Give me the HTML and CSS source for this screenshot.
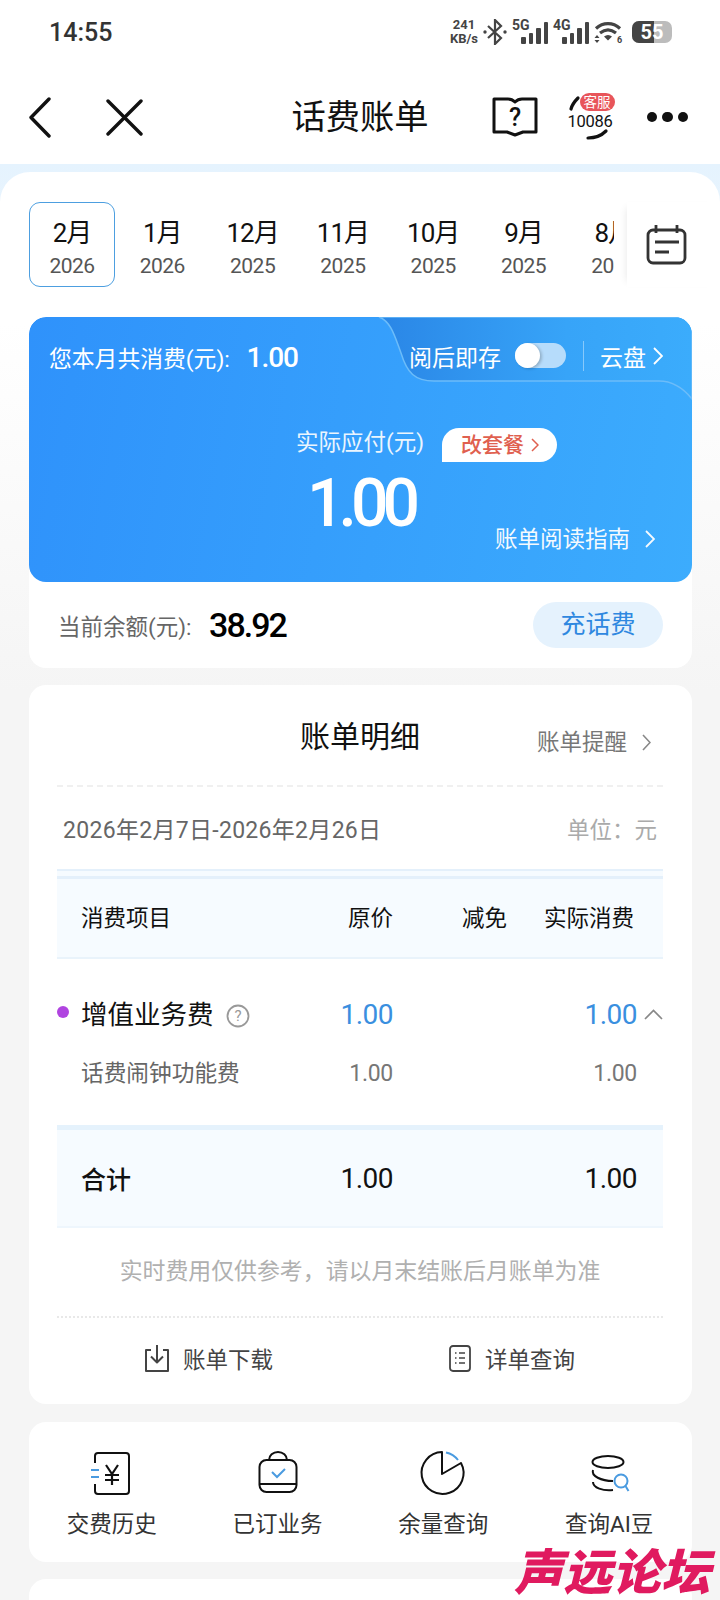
FILE: index.html
```html
<!DOCTYPE html>
<html lang="zh-CN">
<head>
  <meta charset="UTF-8">
  <meta name="viewport" content="width=device-width, initial-scale=1.0">
  <title>话费账单</title>
  <link rel="stylesheet" href="styles.css">
</head>
<body>
  <div class="status-bar">
    <div class="time">14:55</div>
    <div class="status-icons">
      <div class="speed"><span>241</span><span>KB/s</span></div>
      <svg class="ic-bt" width="24" height="26" viewBox="0 0 24 26"><path d="M5 7l13 12-6 6V1l6 6L5 19" fill="none" stroke="#444" stroke-width="2.2"/><circle cx="2" cy="13" r="1.7" fill="#444"/><circle cx="22" cy="13" r="1.7" fill="#444"/></svg>
      <div class="signal"><span class="net">5G</span><i class="b1"></i><i class="b2"></i><i class="b3"></i><i class="b4"></i></div>
      <div class="signal"><span class="net">4G</span><i class="b1"></i><i class="b2"></i><i class="b3"></i><i class="b4"></i></div>
      <svg class="ic-wifi" width="29" height="24" viewBox="0 0 29 24"><path d="M2 8.500C9 2 19 2 26 8.500M6 13c5-4 11-4 16 0" fill="none" stroke="#444" stroke-width="3.200"/><path d="M10 16.500c2.500-2 5.500-2 8 0l-4 4z" fill="#444"/><path d="M3 15l-2.500 3h5zM3 23l-2.500-3h5z" fill="#444"/><text x="23" y="23" class="wifi-num">6</text></svg>
      <div class="battery"><div class="battery-fill"></div><span>55</span></div>
    </div>
  </div>

  <div class="nav">
    <div class="nav-left">
      <svg width="24" height="41" viewBox="0 0 24 41"><path d="M21 2L3 20.500 21 39" fill="none" stroke="#111" stroke-width="3.400" stroke-linecap="round" stroke-linejoin="round"/></svg>
      <svg width="37" height="37" viewBox="0 0 37 37"><path d="M2 2l33 33M35 2L2 35" fill="none" stroke="#111" stroke-width="3.400" stroke-linecap="round"/></svg>
    </div>
    <div class="nav-title">话费账单</div>
    <div class="nav-right">
      <svg class="ic-book" width="46" height="40" viewBox="0 0 46 40"><path d="M2 2h14c3 0 5 1 7 3 2-2 4-3 7-3h14v33H31l-8 3-8-3H2z" fill="none" stroke="#111" stroke-width="3" stroke-linejoin="round"/><text x="23" y="29" class="book-q">?</text></svg>
      <div class="service">
        <svg class="service-arcs" width="46" height="46" viewBox="0 0 46 46"><path d="M3 15c1-4 3-7 7-11M20 44c7 0 13-2 18-7" fill="none" stroke="#111" stroke-width="3.200" stroke-linecap="round"/></svg>
        <span class="service-num">10086</span>
        <span class="service-tag">客服</span>
      </div>
      <div class="dots"><i></i><i></i><i></i></div>
    </div>
  </div>

  <div class="band">
    <div class="sheet">
      <div class="months">
        <div class="month-list">
          <div class="month active"><b>2月</b><span>2026</span></div>
          <div class="month"><b>1月</b><span>2026</span></div>
          <div class="month"><b>12月</b><span>2025</span></div>
          <div class="month"><b>11月</b><span>2025</span></div>
          <div class="month"><b>10月</b><span>2025</span></div>
          <div class="month"><b>9月</b><span>2025</span></div>
          <div class="month"><b>8月</b><span>2025</span></div>
        </div>
        <div class="month-cal">
          <svg width="41" height="41" viewBox="0 0 41 41"><rect x="2" y="6" width="37" height="33" rx="5" fill="none" stroke="#333" stroke-width="2.800"/><path d="M10 1v8M31 1v8M9 18h24M9 28h14" fill="none" stroke="#333" stroke-width="2.800"/></svg>
        </div>
      </div>

      <div class="card summary">
        <div class="hero">
          <svg class="hero-bg" width="663" height="100" viewBox="0 0 663 100"><defs><linearGradient id="heroShade" x1="0" y1="0" x2="1" y2="0"><stop offset="0" stop-color="#2a86e6"/><stop offset="0.6" stop-color="#37a4f8"/><stop offset="1" stop-color="#3bacfc"/></linearGradient></defs><path d="M350 0c12 4 16 20 22 36 6 20 14 28 33 28h225c15 0 25 8 33 18V0z" fill="url(#heroShade)" stroke="#6cbcf9" stroke-width="1.500"/></svg>
          <div class="hero-top">
            <div class="hero-total">您本月共消费(元): <span class="num">1.00</span></div>
            <div class="hero-tools">
              <span>阅后即存</span>
              <div class="toggle"><div class="knob"></div></div>
              <div class="sep"></div>
              <span>云盘</span>
              <svg class="chev" width="10" height="18" viewBox="0 0 10 18"><path d="M1 1l8 8-8 8" fill="none" stroke="#fff" stroke-width="1.800"/></svg>
            </div>
          </div>
          <div class="hero-pay">
            <div class="pay-label">实际应付(元)</div>
            <div class="pay-tag">改套餐 <svg width="8" height="14" viewBox="0 0 8 14"><path d="M1 1l6 6-6 6" fill="none" stroke="#e0604f" stroke-width="1.500"/></svg></div>
          </div>
          <div class="pay-amount">1.00</div>
          <div class="hero-guide">账单阅读指南 <svg width="10" height="18" viewBox="0 0 10 18"><path d="M1 1l8 8-8 8" fill="none" stroke="#fff" stroke-width="1.800"/></svg></div>
        </div>
        <div class="balance">
          <div class="balance-text">当前余额(元): <span class="balance-num">38.92</span></div>
          <div class="recharge">充话费</div>
        </div>
      </div>

      <div class="card detail">
        <div class="detail-head">
          <div class="detail-title">账单明细</div>
          <div class="detail-remind">账单提醒 <svg width="9" height="17" viewBox="0 0 9 17"><path d="M1 1l7 7.500-7 7.500" fill="none" stroke="#888" stroke-width="1.600"/></svg></div>
        </div>
        <div class="period">
          <span>2026年2月7日-2026年2月26日</span>
          <span class="unit">单位：元</span>
        </div>
        <div class="row row-head">
          <div>消费项目</div>
          <div class="r">原价</div>
          <div class="r">减免</div>
          <div class="r nudge">实际消费</div>
        </div>
        <div class="row row-item">
          <div class="item-name"><i class="dot"></i>增值业务费
            <svg width="24" height="24" viewBox="0 0 24 24"><circle cx="12" cy="12" r="10.500" fill="none" stroke="#999" stroke-width="1.800"/><text x="12" y="17" class="q-mark">?</text></svg>
          </div>
          <div class="r num">1.00</div>
          <div></div>
          <div class="r num">1.00</div>
          <svg class="row-chev" width="19" height="11" viewBox="0 0 19 11"><path d="M1 10l8.500-8.500L18 10" fill="none" stroke="#888" stroke-width="1.700"/></svg>
        </div>
        <div class="row row-sub">
          <div>话费闹钟功能费</div>
          <div class="r sub-num">1.00</div>
          <div></div>
          <div class="r sub-num">1.00</div>
        </div>
        <div class="row row-total">
          <div class="total-name">合计</div>
          <div class="r num">1.00</div>
          <div></div>
          <div class="r num">1.00</div>
        </div>
        <div class="note">实时费用仅供参考，请以月末结账后月账单为准</div>
        <div class="links">
          <div class="link">
            <svg width="26" height="28" viewBox="0 0 26 28"><path d="M7 6H2v21h22V6h-5M13 1v17M7 12.500l6 6 6-6" fill="none" stroke="#444" stroke-width="2" stroke-linejoin="round"/></svg>
            账单下载
          </div>
          <div class="link">
            <svg width="24" height="27" viewBox="0 0 24 27"><rect x="2" y="1" width="20" height="25" rx="3" fill="none" stroke="#444" stroke-width="1.800"/><path d="M7 8h1.500M7 13h1.500M7 18h1.500M11 8h6M11 13h6M11 18h6" fill="none" stroke="#444" stroke-width="1.500"/></svg>
            详单查询
          </div>
        </div>
      </div>

      <div class="card shortcuts">
        <div class="shortcut">
          <svg width="56" height="48" viewBox="0 0 56 48"><path d="M11 13V6a3 3 0 0 1 3-3h28a3 3 0 0 1 3 3v35a3 3 0 0 1-3 3H14a3 3 0 0 1-3-3v-7" fill="none" stroke="#111" stroke-width="2"/><path d="M7 20h8M7 27h8" fill="none" stroke="#4a9be0" stroke-width="2"/><path d="M22 15l6 9 6-9M28 24v11M21 25h14M21 30h14" fill="none" stroke="#111" stroke-width="2.200"/></svg>
          <span>交费历史</span>
        </div>
        <div class="shortcut">
          <svg width="56" height="48" viewBox="0 0 56 48"><rect x="9.500" y="10" width="37" height="32" rx="7" fill="none" stroke="#111" stroke-width="2"/><path d="M9.500 34h37M19 10a9 8 0 0 1 18 0" fill="none" stroke="#111" stroke-width="2"/><path d="M22 22l5 5 8-8" fill="none" stroke="#4a9be0" stroke-width="2"/></svg>
          <span>已订业务</span>
        </div>
        <div class="shortcut">
          <svg width="56" height="48" viewBox="0 0 56 48"><path d="M27 2A21 21 0 1 0 46 13L27 24z" fill="none" stroke="#111" stroke-width="2" stroke-linejoin="round"/><path d="M31 2.500A21 21 0 0 1 43 10" fill="none" stroke="#4a9be0" stroke-width="2"/></svg>
          <span>余量查询</span>
        </div>
        <div class="shortcut">
          <svg width="56" height="48" viewBox="0 0 56 48"><ellipse cx="27" cy="12" rx="15.500" ry="6" fill="none" stroke="#111" stroke-width="2"/><path d="M12 20c-2 6 8 11 20 11M12 32c0 6 10 9 20 8" fill="none" stroke="#111" stroke-width="2"/><circle cx="40" cy="31" r="6.500" fill="#fff" stroke="#4a9be0" stroke-width="2"/><path d="M44.500 36l3 5" fill="none" stroke="#4a9be0" stroke-width="2"/></svg>
          <span>查询AI豆</span>
        </div>
      </div>

      <div class="card next"></div>
    </div>
  </div>

  <div class="watermark">声远论坛</div>
</body>
</html>
```

FILE: styles.css
```css
html, body {
  margin: 0;
  height: 1600px;
  overflow: hidden;
}
body {
  position: relative;
  background: #f5f5f5;
  font-family: Roboto, "Noto Sans CJK SC", sans-serif;
  color: #111;
}
svg { display: block; flex: none; }
.num { font-family: Roboto, sans-serif; }

/* status bar */
.status-bar {
  height: 64px;
  background: #fff;
  display: flex;
  justify-content: space-between;
  align-items: center;
  padding: 0 48px 0 49px;
}
.time {
  font-size: 25px;
  font-weight: 500;
  color: #333;
}
.status-icons {
  display: flex;
  align-items: center;
  gap: 5px;
  color: #444;
}
.speed {
  display: flex;
  flex-direction: column;
  align-items: center;
  font-size: 13px;
  font-weight: 700;
  line-height: 14px;
  width: 30px;
  margin-right: -3px;
}
.ic-bt { margin-left: 2px; }
.signal {
  position: relative;
  width: 36px;
  height: 24px;
  display: flex;
  align-items: flex-end;
  justify-content: flex-end;
  gap: 3px;
}
.signal i {
  width: 4.500px;
  background: #444;
  border-radius: 1px;
}
.signal .b1 { height: 7px; }
.signal .b2 { height: 11px; }
.signal .b3 { height: 16px; }
.signal .b4 { height: 22px; }
.net {
  position: absolute;
  left: 0;
  top: -3px;
  font-size: 14px;
  font-weight: 700;
}
.wifi-num {
  font-family: Roboto, sans-serif;
  font-size: 9px;
  font-weight: 700;
  fill: #444;
}
.battery {
  position: relative;
  width: 40px;
  height: 22px;
  margin-left: 4px;
  border-radius: 7px;
  background: #bcbcbc;
  overflow: hidden;
  color: #fff;
  font-size: 20px;
  font-weight: 700;
  line-height: 22px;
  text-align: center;
}
.battery-fill {
  position: absolute;
  left: 0;
  top: 0;
  bottom: 0;
  width: 22px;
  background: #444;
}
.battery span { position: relative; }

/* nav */
.nav {
  position: relative;
  height: 94px;
  padding-top: 6px;
  background: #fff;
  display: flex;
  align-items: center;
  justify-content: space-between;
  padding-left: 28px;
  padding-right: 32px;
}
.nav-left {
  display: flex;
  align-items: center;
  gap: 54px;
}
.nav-title {
  position: absolute;
  left: 0;
  right: 0;
  text-align: center;
  font-size: 34.300px;
  line-height: 44px;
}
.nav-right {
  display: flex;
  align-items: center;
}
.book-q {
  font-family: Roboto, sans-serif;
  font-size: 25px;
  font-weight: 500;
  text-anchor: middle;
  fill: #111;
}
.service {
  position: relative;
  width: 46px;
  height: 46px;
  margin-left: 30px;
  margin-right: 33px;
}
.service-arcs {
  position: absolute;
  left: 0;
  top: 0;
}
.service-num {
  position: absolute;
  left: 0;
  top: 18px;
  font-size: 16.500px;
  line-height: 20px;
  letter-spacing: -0.300px;
}
.service-tag {
  position: absolute;
  left: 12px;
  top: -1px;
  width: 35px;
  height: 18px;
  border-radius: 9px;
  background: #e8555a;
  color: #fff;
  font-size: 13.500px;
  line-height: 18px;
  text-align: center;
}
.dots {
  display: flex;
  gap: 5px;
}
.dots i {
  width: 10.500px;
  height: 10.500px;
  border-radius: 50%;
  background: #111;
}

/* sheet */
.band {
  padding-top: 8px;
  background: linear-gradient(#e5f3fe, #e9f4fd 60px, #f5f5f5 300px);
}
.sheet {
  height: 1428px;
  padding: 30px 28px 0 29px;
  border-radius: 30px 30px 0 0;
  background: linear-gradient(#fff, #fff 150px, #f5f5f5 520px);
  overflow: hidden;
}

/* month tabs */
.months {
  display: flex;
  height: 85px;
  margin-right: -28px;
}
.month-list {
  width: 585px;
  display: flex;
  gap: 4.300px;
  overflow: hidden;
  flex: none;
}
.month {
  width: 86px;
  height: 85px;
  flex: none;
  box-sizing: border-box;
  display: flex;
  flex-direction: column;
  align-items: center;
  border-radius: 11px;
  border: 1.500px solid transparent;
}
.month.active { border-color: #4d9fe0; }
.month b {
  font-weight: 400;
  font-size: 26px;
  line-height: 30px;
  margin-top: 15px;
  letter-spacing: -1px;
}
.month span {
  font-size: 21px;
  line-height: 26px;
  margin-top: 5px;
  color: #555;
  letter-spacing: -0.500px;
}
.month-cal {
  flex: 1;
  margin-left: 13px;
  display: flex;
  justify-content: center;
  align-items: center;
  padding-right: 14px;
  background: #fff;
  box-shadow: -6px 0 8px -6px rgba(0, 0, 0, 0.1);
}

/* cards */
.card {
  background: #fff;
  border-radius: 17px;
}
.summary {
  margin-top: 30px;
  height: 351px;
  overflow: hidden;
}
.hero {
  position: relative;
  height: 265px;
  border-radius: 17px;
  background: linear-gradient(100deg, #2f92fb, #3cacfd);
  color: #fff;
  overflow: hidden;
}
.hero-bg {
  position: absolute;
  left: 0;
  top: 0;
}
.hero-top {
  position: relative;
  display: flex;
  justify-content: space-between;
  align-items: center;
  height: 80px;
  padding: 0 29px 0 20px;
  font-size: 23px;
}
.hero-total {
  display: flex;
  align-items: center;
  font-size: 22.800px;
  white-space: pre;
}
.hero-total .num {
  font-size: 28px;
  font-weight: 500;
  letter-spacing: -1px;
  margin-left: 11px;
}
.hero-tools {
  display: flex;
  align-items: center;
  margin-top: -3px;
}
.toggle {
  position: relative;
  width: 51px;
  height: 25px;
  margin-left: 14px;
  border-radius: 13px;
  background: #b6dcfb;
}
.knob {
  width: 25px;
  height: 25px;
  border-radius: 50%;
  background: #fff;
  box-shadow: 2px 1px 3px rgba(0, 0, 0, 0.2);
}
.sep {
  width: 1px;
  height: 30px;
  margin: 0 16px 0 17px;
  background: rgba(255, 255, 255, 0.4);
}
.hero-tools .chev { margin-left: 7px; }
.hero-pay {
  position: relative;
  display: flex;
  align-items: flex-start;
  margin: 31px 0 0 267px;
  height: 34px;
}
.pay-label {
  font-size: 22.500px;
  line-height: 28px;
  opacity: 0.9;
}
.pay-tag {
  display: flex;
  align-items: center;
  gap: 7px;
  box-sizing: border-box;
  width: 115px;
  height: 34px;
  margin-left: 18px;
  padding-left: 19px;
  border-radius: 17px 17px 17px 0;
  background: #fff;
  color: #e0604f;
  font-size: 21px;
  line-height: 36px;
  font-weight: 500;
}
.pay-amount {
  position: relative;
  margin-top: 1px;
  text-align: center;
  font-size: 66px;
  font-weight: 500;
  line-height: 82px;
  letter-spacing: -6px;
}
.hero-guide {
  position: absolute;
  right: 37px;
  top: 206px;
  display: flex;
  align-items: center;
  gap: 15px;
  font-size: 22.500px;
  line-height: 32px;
  opacity: 0.95;
}
.balance {
  height: 86px;
  display: flex;
  justify-content: space-between;
  align-items: center;
  padding: 0 29px;
}
.balance-text {
  display: flex;
  align-items: center;
  font-size: 22.500px;
  color: #666;
  white-space: pre;
}
.balance-num {
  margin-left: 12px;
  font-family: Roboto, sans-serif;
  font-size: 34px;
  font-weight: 500;
  color: #000;
  letter-spacing: -2px;
}
.recharge {
  width: 130px;
  height: 46px;
  border-radius: 23px;
  background: #e5f2fd;
  color: #2f88e0;
  font-size: 25px;
  line-height: 46px;
  text-align: center;
}

/* detail */
.detail {
  margin-top: 17px;
  height: 719px;
  padding: 0 29px 0 28px;
}
.detail-head {
  position: relative;
  box-sizing: border-box;
  height: 102px;
  border-bottom: 2px dashed #f0f0f0;
}
.detail-title {
  padding-top: 32px;
  text-align: center;
  font-size: 30px;
  line-height: 40px;
}
.detail-remind {
  position: absolute;
  right: 12px;
  top: 41px;
  display: flex;
  align-items: center;
  gap: 15px;
  font-size: 22.500px;
  line-height: 32px;
  color: #777;
}
.period {
  height: 82px;
  padding: 0 6px;
  display: flex;
  justify-content: space-between;
  align-items: center;
  font-size: 23px;
  color: #666;
  letter-spacing: 0.300px;
}
.unit {
  color: #aaa;
  font-size: 22.500px;
  letter-spacing: 0;
}
.row {
  display: grid;
  grid-template-columns: 1fr 80px 114px 130px 26px;
  align-items: center;
  padding-left: 24px;
}
.r { text-align: right; }
.nudge { padding-right: 3px; }
.row-head {
  box-sizing: border-box;
  height: 90px;
  padding-top: 4px;
  border-top: 2px solid #e4f0fb;
  border-bottom: 2px solid #e9f3fb;
  background: linear-gradient(#f6fbff 5px, #e4f0fb 5px, #e4f0fb 8px, #f6fbff 8px);
  font-size: 22.500px;
}
.row-item {
  position: relative;
  box-sizing: border-box;
  height: 98px;
  padding-top: 13px;
}
.row-item .num {
  font-size: 28px;
  color: #3a8fdf;
  letter-spacing: -0.500px;
}
.item-name {
  display: flex;
  align-items: center;
  font-size: 26.500px;
  line-height: 36px;
}
.item-name svg { margin-left: 12px; margin-top: 2px; }
.q-mark {
  font-family: Roboto, sans-serif;
  font-size: 15px;
  text-anchor: middle;
  fill: #999;
}
.dot {
  position: absolute;
  left: 0;
  top: 47px;
  width: 12px;
  height: 12px;
  border-radius: 50%;
  background: #b044e0;
}
.row-chev { justify-self: end; }
.row-sub {
  height: 68px;
  font-size: 22.700px;
  line-height: 34px;
  color: #666;
  align-items: start;
}
.sub-num {
  font-size: 23px;
  color: #777;
  letter-spacing: -0.300px;
}
.row-total {
  box-sizing: border-box;
  height: 103px;
  border-top: 5px solid #e5f2fc;
  border-bottom: 2px solid #eef6fd;
  background: #f6fbff;
}
.total-name {
  font-size: 25px;
  font-weight: 500;
}
.row-total .num {
  font-size: 28px;
  color: #111;
  letter-spacing: -0.500px;
}
.note {
  box-sizing: border-box;
  height: 90px;
  padding-top: 28px;
  border-bottom: 2px dotted #e8e8e8;
  text-align: center;
  font-size: 22.900px;
  line-height: 32px;
  color: #b0b0b0;
}
.links {
  display: flex;
  box-sizing: border-box;
  height: 86px;
  padding-bottom: 6px;
  font-size: 22.500px;
  color: #444;
}
.link {
  flex: 1;
  display: flex;
  justify-content: center;
  align-items: center;
  gap: 13px;
}

/* shortcuts */
.shortcuts {
  margin-top: 18px;
  height: 140px;
  display: grid;
  grid-template-columns: repeat(4, 1fr);
  padding-top: 28px;
  box-sizing: border-box;
}
.shortcut {
  display: flex;
  flex-direction: column;
  align-items: center;
  font-size: 22.500px;
  line-height: 32px;
  color: #333;
}
.shortcut span { margin-top: 10px; }
.next {
  margin-top: 17px;
  height: 100px;
}

/* forum watermark over the page corner */
.watermark {
  position: absolute;
  left: 514px;
  top: 1549px;
  font-size: 49px;
  line-height: 50px;
  font-weight: 900;
  font-style: italic;
  color: #e01a5f;
  white-space: nowrap;
}
```
